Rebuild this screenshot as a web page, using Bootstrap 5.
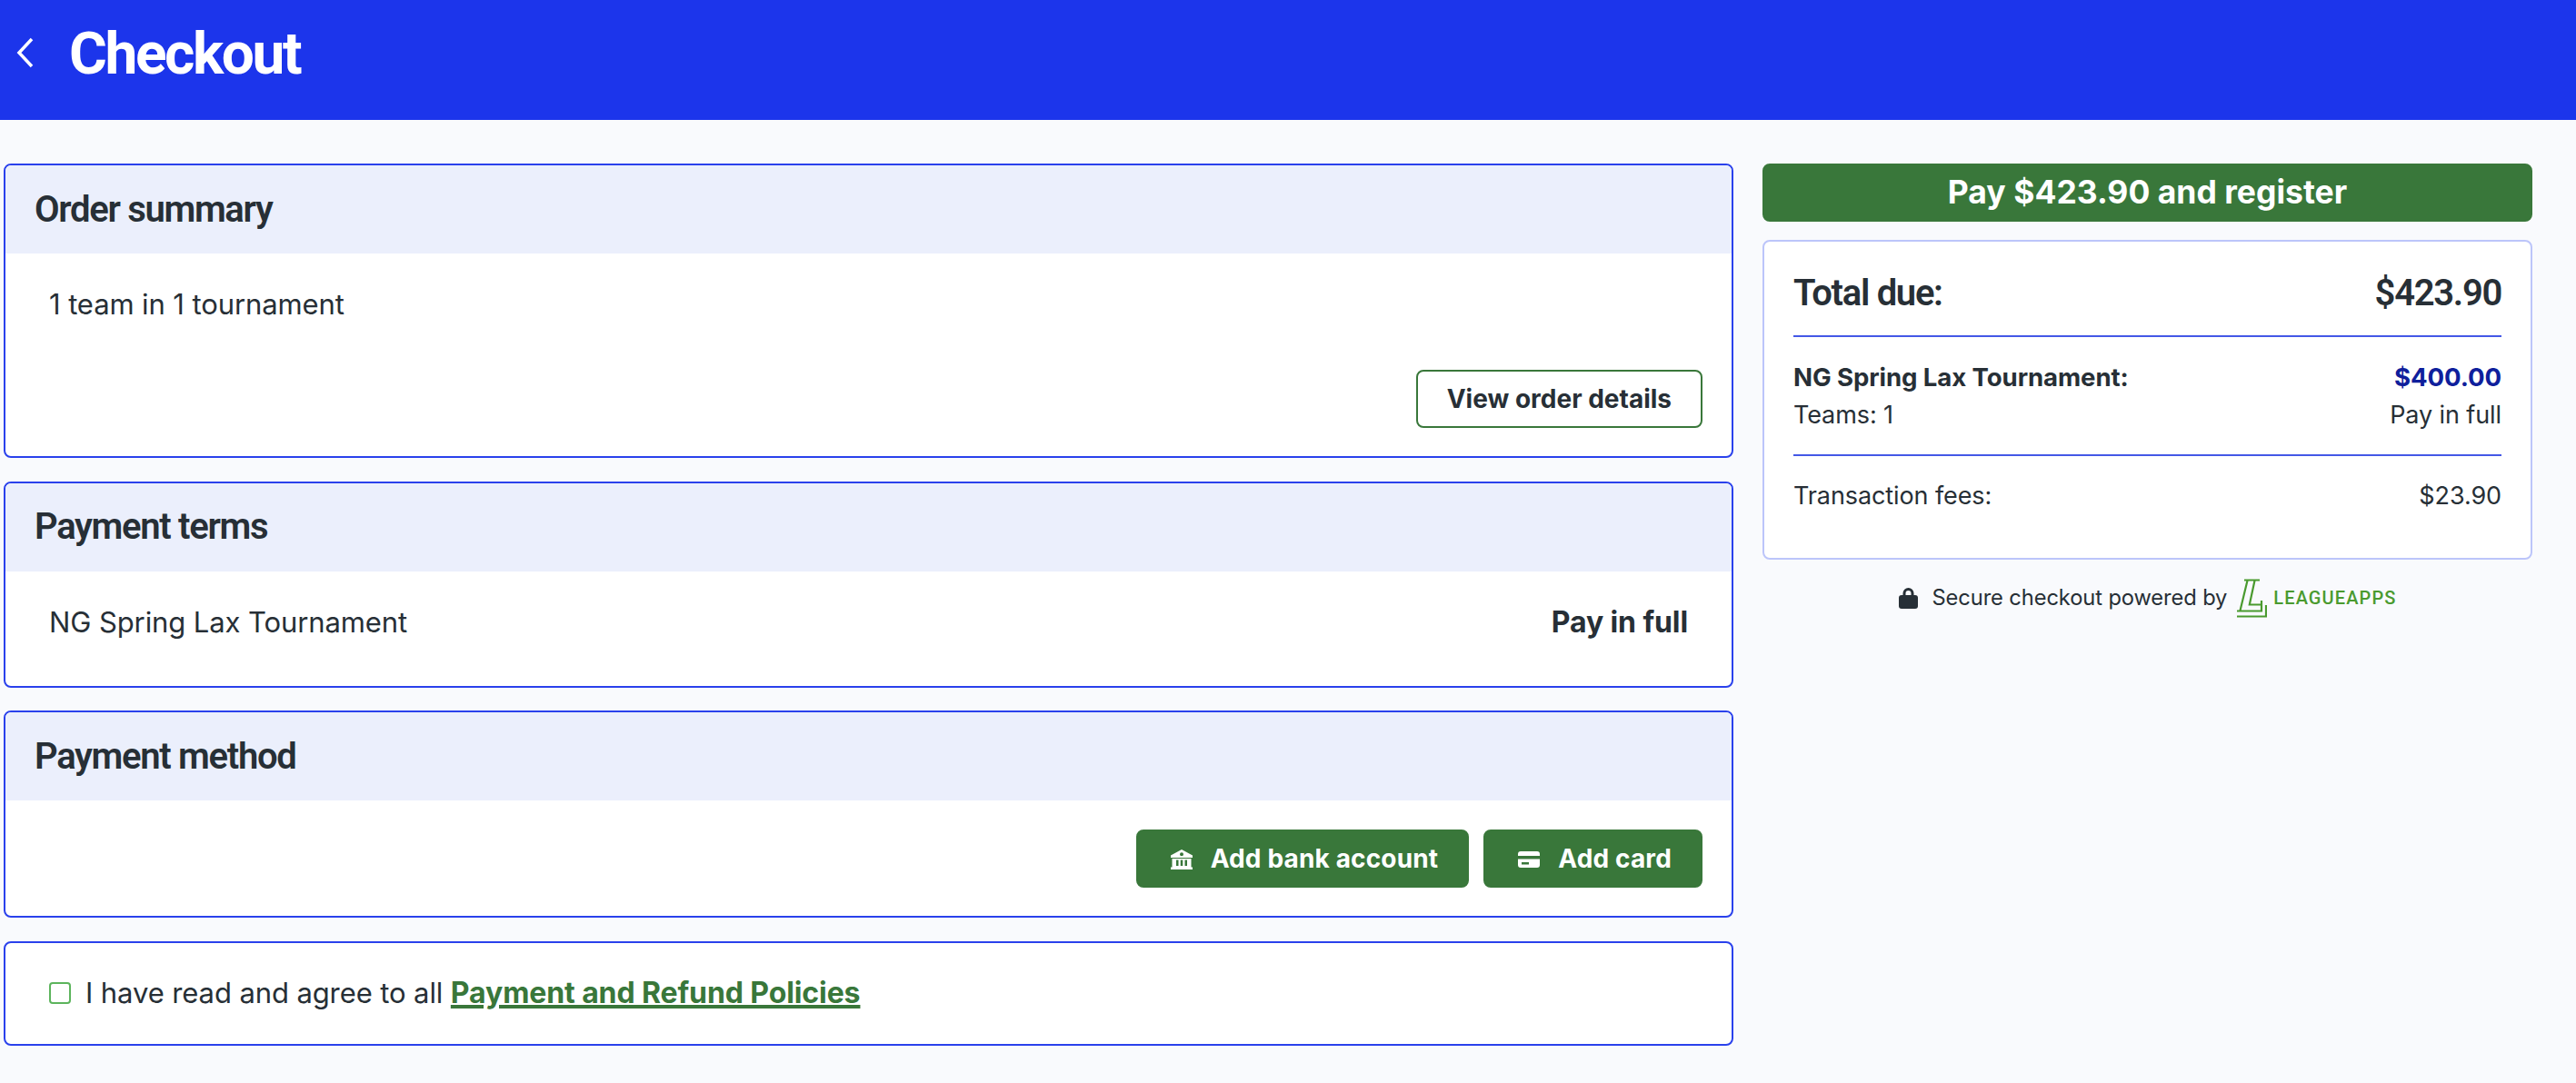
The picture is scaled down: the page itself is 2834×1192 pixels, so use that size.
<!DOCTYPE html>
<html lang="en">
<head>
    <meta charset="UTF-8">
    <title>Checkout</title>
    <meta name="viewport" content="width=device-width, initial-scale=1">
    <link href="https://cdn.jsdelivr.net/npm/bootstrap@5.3.0/dist/css/bootstrap.min.css" rel="stylesheet">
    <style>
        body {
            background: #f9fafd;
            color: #272f36;
            font-family: "Inter", "Liberation Sans", sans-serif;
            font-size: 31px;
            letter-spacing: -.1px;
            line-height: 48px;
        }
        .page-head {
            background: #1c35eb;
            height: 132px;
            padding: 0 0 16px 18px;
            gap: 38px;
        }
        .page-head h1 {
            font: 700 64px/1 "Roboto", sans-serif;
            letter-spacing: -2.4px;
            color: #fff;
            margin: 3px 0 0;
        }
        .main-wrap {
            padding: 48px 48px 40px 4px;
            gap: 32px;
        }
        .left-col { width: 1903px; gap: 25.500px; }
        .right-col { width: 847px; }
        .pane {
            --bs-card-border-color: #2a41ec;
            --bs-card-border-width: 2px;
            --bs-card-border-radius: 8px;
            --bs-card-inner-border-radius: 6px;
            --bs-card-cap-bg: #ebeffc;
            --bs-card-cap-padding-y: 0;
            --bs-card-cap-padding-x: 32px;
            --bs-card-spacer-y: 32px;
            --bs-card-spacer-x: 32px;
        }
        .pane .card-header {
            height: 97px;
            border: 0;
            display: flex;
            align-items: center;
        }
        .pane h2 {
            font: 600 40px/1 "Roboto", sans-serif;
            letter-spacing: -1.3px;
            margin: 0;
            color: #272f36;
        }
        .pane .card-body { padding-bottom: 31px; }
        .pane .pane-terms { padding-bottom: 46px; }
        .pane-text { padding: 0 16px; }
        .pane-text .fw-bold { font-size: 32px; }
        .btn-go, .btn-line {
            --bs-btn-padding-x: 32px;
            --bs-btn-padding-y: 0;
            --bs-btn-font-size: 28px;
            --bs-btn-font-weight: 700;
            --bs-btn-line-height: 60px;
            --bs-btn-border-radius: 8px;
            --bs-btn-border-width: 2px;
        }
        .btn-go {
            --bs-btn-bg: #39773a;
            --bs-btn-border-color: #39773a;
            --bs-btn-color: #fff;
            letter-spacing: .15px;
        }
        .btn-line {
            --bs-btn-bg: #fff;
            --bs-btn-border-color: #39773a;
            --bs-btn-color: #272f36;
            letter-spacing: 0;
        }
        .btn-go svg { width: 24px; height: 24px; margin: 0 20px 0 4px; vertical-align: -3px; fill: #fff; }
        .btn-pay { --bs-btn-font-size: 35.500px; letter-spacing: 0; }
        .agree-row { height: 111px; padding-left: 48px; }
        .agree-box {
            width: 24px;
            height: 24px;
            border: 2px solid #5cb45c;
            border-radius: 4px;
            background: #fff;
            margin-right: 16px;
        }
        .agree-row a {
            color: #39773a;
            font-size: 32px;
            font-weight: 700;
            text-decoration-thickness: 4px;
        }
        .sum-box {
            margin-top: 20px;
            height: 352px;
            border: 2px solid #bcc5fa;
            border-radius: 8px;
            background: #fff;
            padding: 0 32px;
        }
        .sum-total {
            height: 105px;
            padding-top: 10px;
            font: 600 40px/1 "Roboto", sans-serif;
            letter-spacing: -1.300px;
            border-bottom: 2px solid #4458e6;
        }
        .sum-line {
            font-size: 27px;
            line-height: 41px;
            padding: 24px 0 23px;
            border-bottom: 2px solid #4458e6;
        }
        .sum-name { font-size: 27.600px; }
        .sum-price { color: #0f1f9c; }
        .sum-fees { font-size: 27px; line-height: 41px; padding-top: 23px; }
        .secure-row {
            margin-top: 18px;
            font-size: 23.700px;
            line-height: 48px;
            gap: 16px;
        }
        .la-logo { color: #4a9a2f; gap: 7px; margin-left: -6px; }
        .la-name {
            font: 500 20px/1 "Roboto", sans-serif;
            letter-spacing: 1.100px;
        }
    </style>
</head>
<body>

<div class="page-head d-flex align-items-center">
    <svg width="20" height="34" viewBox="0 0 20 34" fill="none" stroke="#fff" stroke-width="3.5"><path d="M17 2 3 17l14 15"/></svg>
    <h1>Checkout</h1>
</div>

<div class="main-wrap d-flex align-items-start">
    <div class="left-col d-flex flex-column">

        <!-- Order summary -->
        <div class="card pane">
            <div class="card-header"><h2>Order summary</h2></div>
            <div class="card-body">
                <div class="pane-text mb-5">1 team in 1 tournament</div>
                <div class="d-flex justify-content-end">
                    <button type="button" class="btn btn-line">View order details</button>
                </div>
            </div>
        </div>

        <!-- Payment terms -->
        <div class="card pane">
            <div class="card-header"><h2>Payment terms</h2></div>
            <div class="card-body pane-terms">
                <div class="pane-text d-flex justify-content-between">
                    <span>NG Spring Lax Tournament</span>
                    <span class="fw-bold">Pay in full</span>
                </div>
            </div>
        </div>

        <!-- Payment method -->
        <div class="card pane">
            <div class="card-header"><h2>Payment method</h2></div>
            <div class="card-body">
                <div class="d-flex justify-content-end gap-3">
                    <button type="button" class="btn btn-go">
                        <svg viewBox="0 0 24 24"><path fill-rule="evenodd" d="M12 1 24 7.500V10H0V7.500zm0 3.200a2 2 0 1 0 0 4 2 2 0 0 0 0-4zM1.500 11h21v9.500h1.500V23H0v-2.500h1.500zM6 12.500V19h2.500v-6.500zm4.750 0V19h2.500v-6.500zm4.750 0V19H18v-6.500z"/></svg>Add bank account
                    </button>
                    <button type="button" class="btn btn-go">
                        <svg viewBox="0 0 24 24"><path fill-rule="evenodd" d="M3 3h18a3 3 0 0 1 3 3v2H0V6a3 3 0 0 1 3-3zM0 11.500h24V18a3 3 0 0 1-3 3H3a3 3 0 0 1-3-3zM4 15v2.500h8V15z"/></svg>Add card
                    </button>
                </div>
            </div>
        </div>

        <!-- Policies -->
        <div class="card pane">
            <div class="agree-row d-flex align-items-center">
                <span class="agree-box"></span>
                <span>I have read and agree to all <a href="#">Payment and Refund Policies</a></span>
            </div>
        </div>
    </div>

    <div class="right-col">
        <button type="button" class="btn btn-go btn-pay w-100">Pay $423.90 and register</button>

        <div class="sum-box">
            <div class="sum-total d-flex justify-content-between align-items-center">
                <span>Total due:</span>
                <span>$423.90</span>
            </div>
            <div class="sum-line">
                <div class="sum-name d-flex justify-content-between fw-bold">
                    <span>NG Spring Lax Tournament:</span>
                    <span class="sum-price">$400.00</span>
                </div>
                <div class="d-flex justify-content-between">
                    <span>Teams: 1</span>
                    <span>Pay in full</span>
                </div>
            </div>
            <div class="sum-fees d-flex justify-content-between">
                <span>Transaction fees:</span>
                <span>$23.90</span>
            </div>
        </div>

        <div class="secure-row d-flex justify-content-center align-items-center">
            <svg width="21" height="24" viewBox="0 0 21 24"><path fill="#272f36" d="M3 9h15a3 3 0 0 1 3 3v9a3 3 0 0 1-3 3H3a3 3 0 0 1-3-3v-9a3 3 0 0 1 3-3z"/><path fill="none" stroke="#272f36" stroke-width="3" d="M6 10V7a4.500 4.500 0 0 1 9 0v3"/></svg>
            <span>Secure checkout powered by</span>
            <span class="la-logo d-flex align-items-center">
                <svg width="34" height="44" viewBox="0 0 34 44" fill="none" stroke="currentColor" stroke-width="2.200"><path d="M9 2.500h17M12.500 3 4.500 36M20.500 3 14.800 29.500H27M1 36.500h27V25M1 42.500h32V30"/></svg>
                <span class="la-name">LEAGUEAPPS</span>
            </span>
        </div>
    </div>
</div>

</body>
</html>
